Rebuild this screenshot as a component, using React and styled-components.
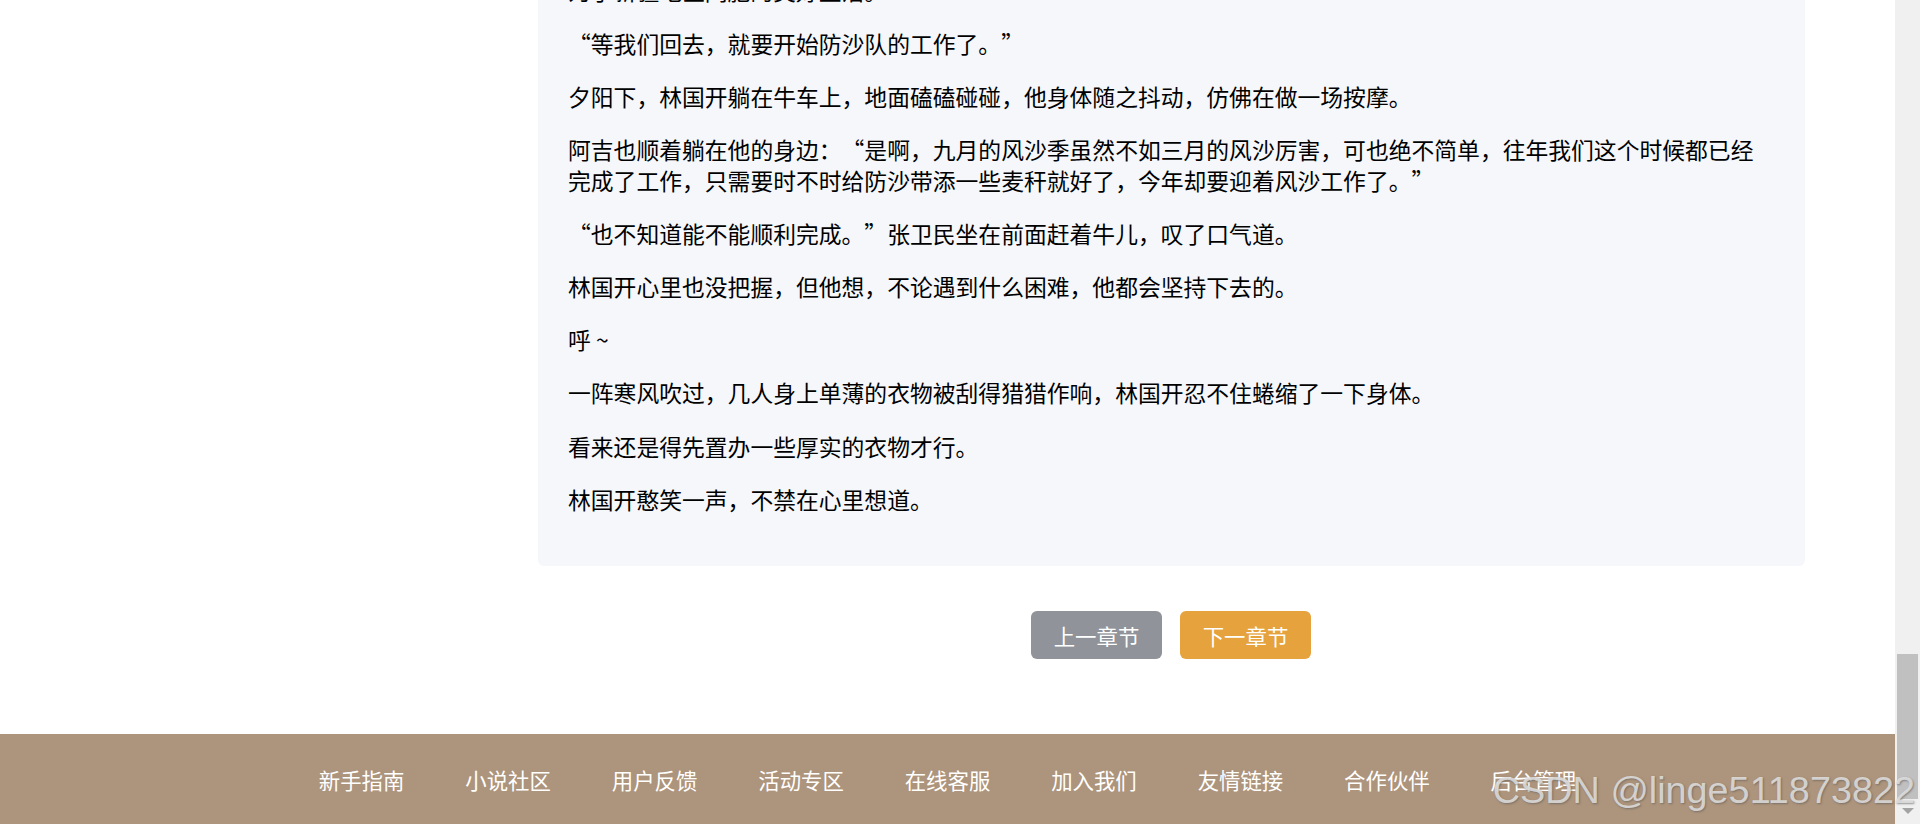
import styled, {createGlobalStyle} from "styled-components";

const GlobalStyle = createGlobalStyle`
  html, body {
    margin: 0;
    height: 100%;
    overflow: hidden;
    background: #fff;
    font-family: "Noto Sans CJK SC", "Liberation Sans", sans-serif;
    text-spacing-trim: space-all;
  }
`;

const Page = styled.div`
  position: relative;
  display: flex;
  height: 824px;
  overflow: hidden;
`;

const Main = styled.main`
  flex: 1;
  display: flex;
  flex-direction: column;
  justify-content: flex-end;
  overflow: hidden;
`;

const Chapter = styled.section`
  flex-shrink: 0;
  width: 1267px;
  margin-left: 538px;
`;

const Card = styled.article`
  box-sizing: border-box;
  padding: 0 30px 28px;
  background: #f5f7fb;
  border-radius: 6px;
`;

const Para = styled.p`
  margin: 22.8px 0;
  font-size: 22.8px;
  line-height: 30.4px;
  color: #000;
`;

const Buttons = styled.div`
  display: flex;
  justify-content: center;
  gap: 18px;
  margin: 45px 1px 75px 0;
`;

const ChapterBtn = styled.button`
  width: 131px;
  height: 48px;
  padding: 0;
  border: 0;
  border-radius: 6px;
  font-family: inherit;
  font-size: 21.4px;
  color: #fff;
  background: ${props => props.$next ? "#e6a23c" : "#909399"};
`;

const Footer = styled.footer`
  flex-shrink: 0;
  display: flex;
  justify-content: center;
  align-items: center;
  gap: 60.9px;
  height: 90px;
  background: #ad947c;
`;

const FooterLink = styled.a`
  font-size: 21.4px;
  color: #fff;
`;

const ScrollTrack = styled.aside`
  position: relative;
  width: 25px;
  background: #f0f0f0;
`;

const ScrollThumb = styled.div`
  position: absolute;
  top: 654px;
  left: 2px;
  width: 21px;
  height: 145px;
  background: #c0c0c0;
`;

const ScrollArrow = styled.div`
  position: absolute;
  left: 7px;
  bottom: 10px;
  width: 0;
  height: 0;
  border-left: 6px solid transparent;
  border-right: 6px solid transparent;
  border-top: 6px solid #a3a3a3;
`;

const Watermark = styled.div`
  position: absolute;
  right: 5px;
  bottom: 13px;
  font-family: "Liberation Sans", sans-serif;
  font-size: 37.8px;
  line-height: 42px;
  white-space: nowrap;
  color: rgba(225, 225, 225, 0.85);
  text-shadow: 1px 1px 2px rgba(90, 90, 90, 0.6);
`;

const paragraphs = [
    "为了新疆地区同胞的美好生活。",
    "“等我们回去，就要开始防沙队的工作了。”",
    "夕阳下，林国开躺在牛车上，地面磕磕碰碰，他身体随之抖动，仿佛在做一场按摩。",
    "阿吉也顺着躺在他的身边：“是啊，九月的风沙季虽然不如三月的风沙厉害，可也绝不简单，往年我们这个时候都已经完成了工作，只需要时不时给防沙带添一些麦秆就好了，今年却要迎着风沙工作了。”",
    "“也不知道能不能顺利完成。”张卫民坐在前面赶着牛儿，叹了口气道。",
    "林国开心里也没把握，但他想，不论遇到什么困难，他都会坚持下去的。",
    "呼 ~",
    "一阵寒风吹过，几人身上单薄的衣物被刮得猎猎作响，林国开忍不住蜷缩了一下身体。",
    "看来还是得先置办一些厚实的衣物才行。",
    "林国开憨笑一声，不禁在心里想道。",
];

const links = ["新手指南", "小说社区", "用户反馈", "活动专区", "在线客服", "加入我们", "友情链接", "合作伙伴", "后台管理"];

const App = () => {
    return (
        <Page>
            <GlobalStyle/>
            <Main>
                <Chapter>
                    <Card>
                        {paragraphs.map((text, i) => <Para key={i}>{text}</Para>)}
                    </Card>
                    <Buttons>
                        <ChapterBtn>上一章节</ChapterBtn>
                        <ChapterBtn $next>下一章节</ChapterBtn>
                    </Buttons>
                </Chapter>
                <Footer>
                    {links.map(item => <FooterLink key={item}>{item}</FooterLink>)}
                </Footer>
            </Main>
            <ScrollTrack>
                <ScrollThumb/>
                <ScrollArrow/>
            </ScrollTrack>
            <Watermark>CSDN @linge511873822</Watermark>
        </Page>
    )
}

export default App;
